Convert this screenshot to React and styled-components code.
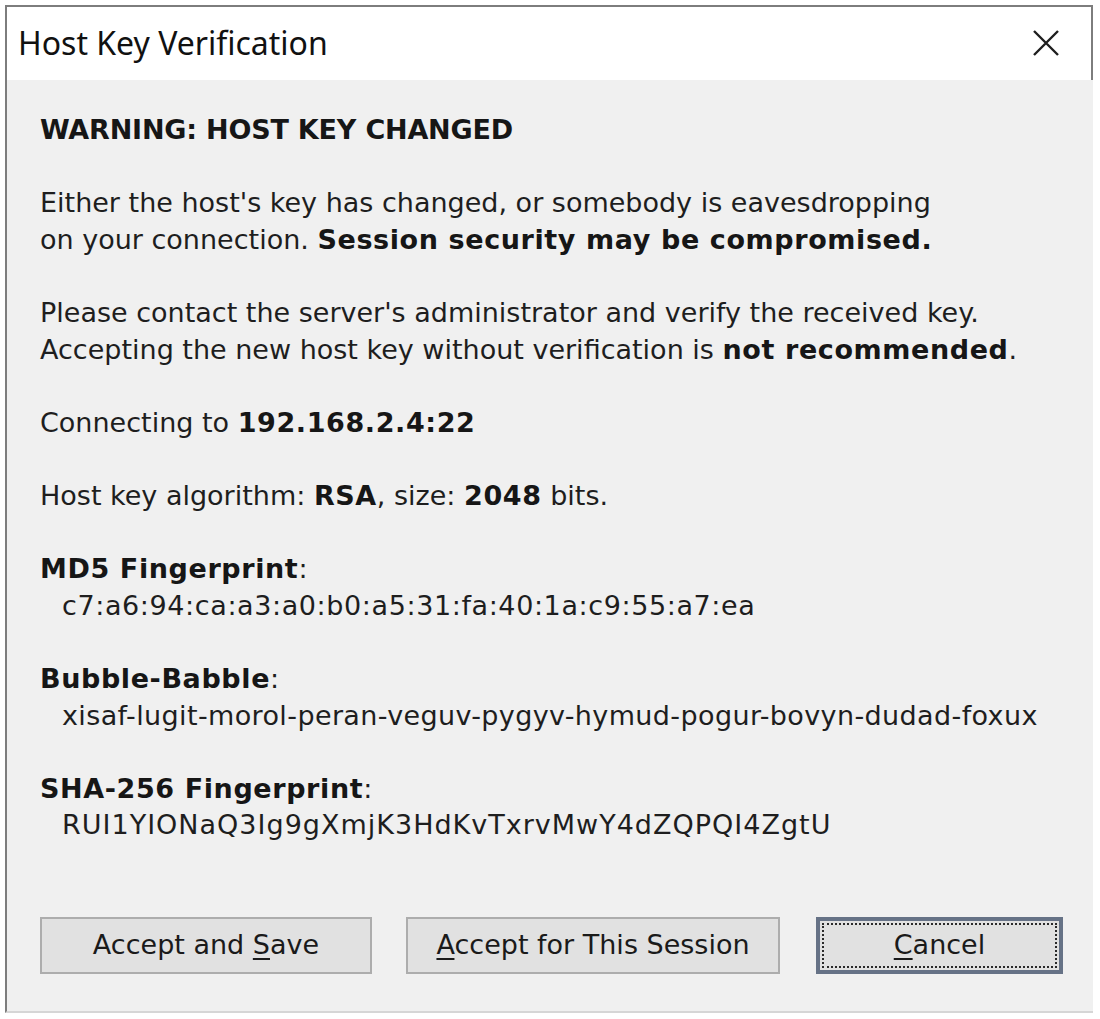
import React from "react";
import styled, { createGlobalStyle } from "styled-components";

const GlobalStyle = createGlobalStyle`
	html, body {
		margin: 0;
		padding: 0;
		background: #ffffff;
	}
`;

const App = () => {
	return (
		<>
			<GlobalStyle />
			<Window>
				<TitleBar>
					<Title>Host Key Verification</Title>
					<CloseButton>
						<svg width="28" height="28" viewBox="0 0 28 28">
							<path d="M2 2 L26 26 M26 2 L2 26" stroke="#1e1e1e" strokeWidth="2.4" fill="none" />
						</svg>
					</CloseButton>
				</TitleBar>
				<Body>
					<Para>
						<Heading>WARNING: HOST KEY CHANGED</Heading>
					</Para>
					<Para>
						Either the host's key has changed, or somebody is eavesdropping
						<br />
						on your connection. <b>Session security may be compromised.</b>
					</Para>
					<Para>
						Please contact the server's administrator and verify the received key.
						<br />
						Accepting the new host key without verification is <b>not recommended</b>.
					</Para>
					<Para>
						Connecting to <b>192.168.2.4:22</b>
					</Para>
					<Para>
						Host key algorithm: <b>RSA</b>, size: <b>2048</b> bits.
					</Para>
					<Para>
						<b>MD5 Fingerprint</b>:
						<Value $spacing={0.6}>c7:a6:94:ca:a3:a0:b0:a5:31:fa:40:1a:c9:55:a7:ea</Value>
					</Para>
					<Para>
						<b>Bubble-Babble</b>:
						<Value $spacing={0.38}>xisaf-lugit-morol-peran-veguv-pygyv-hymud-pogur-bovyn-dudad-foxux</Value>
					</Para>
					<Para>
						<b>SHA-256 Fingerprint</b>:
						<Value $spacing={1}>RUI1YIONaQ3Ig9gXmjK3HdKvTxrvMwY4dZQPQI4ZgtU</Value>
					</Para>
					<Buttons>
						<Button $width={332}>
							<Label>
								Accept and <u>S</u>ave
							</Label>
						</Button>
						<Button $width={374}>
							<Label>
								<u>A</u>ccept for This Session
							</Label>
						</Button>
						<Button $width={247} $default>
							<Label>
								<u>C</u>ancel
							</Label>
						</Button>
					</Buttons>
				</Body>
			</Window>
		</>
	);
};

export default App;

const Window = styled.div`
	margin: 5px 0 0 5px;
	width: 1088px;
	height: 1008px;
	box-sizing: border-box;
	border-top: 2px solid #7d7d7d;
	border-left: 2px solid #7d7d7d;
	border-bottom: 2px solid #d6d6d6;
	display: flex;
	flex-direction: column;
	background: #f0f0f0;
`;

const TitleBar = styled.div`
	height: 73px;
	background: #ffffff;
	border-right: 2px solid #7d7d7d;
	display: flex;
	align-items: center;
	justify-content: space-between;
	padding: 0 31px 0 11px;
`;

const Title = styled.div`
	font-family: "Noto Sans", "Open Sans", sans-serif;
	font-size: 32px;
	color: #111111;
	margin-top: -3px;
`;

const CloseButton = styled.div`
	width: 28px;
	height: 28px;
	display: flex;
	margin-top: -2px;
`;

const Body = styled.div`
	flex: 1;
	padding: 32px 0 0 33px;
	font-family: "DejaVu Sans", Verdana, sans-serif;
	font-size: 27px;
	line-height: 36.6px;
	color: #1e1e1e;

	b {
		font-weight: bold;
		color: #161616;
		letter-spacing: 0.6px;
	}
`;

const Heading = styled.span`
	font-weight: bold;
	color: #161616;
	letter-spacing: -0.2px;
`;

const Para = styled.div`
	margin-bottom: 36.6px;
`;

const Value = styled.div`
	padding-left: 22px;
	letter-spacing: ${(p) => p.$spacing}px;
`;

const Buttons = styled.div`
	display: flex;
	gap: 34px;
	margin-top: 73px;
`;

const Button = styled.div`
	position: relative;
	width: ${(p) => p.$width}px;
	height: 57px;
	box-sizing: border-box;
	background: #e1e1e1;
	border: ${(p) => (p.$default ? "4px solid #667286" : "2px solid #adadad")};
	margin-left: ${(p) => (p.$default ? "2px" : "0")};
	display: flex;
	align-items: center;
	justify-content: center;
	font-size: 27px;
	color: #1a1a1a;

	${(p) =>
		p.$default &&
		`
		&::after {
			content: "";
			position: absolute;
			inset: 2px;
			border: 2px dotted #2a2a2a;
		}
	`}
`;

const Label = styled.span`
	white-space: pre;

	u {
		text-underline-offset: 4px;
		text-decoration-thickness: 2px;
	}
`;
